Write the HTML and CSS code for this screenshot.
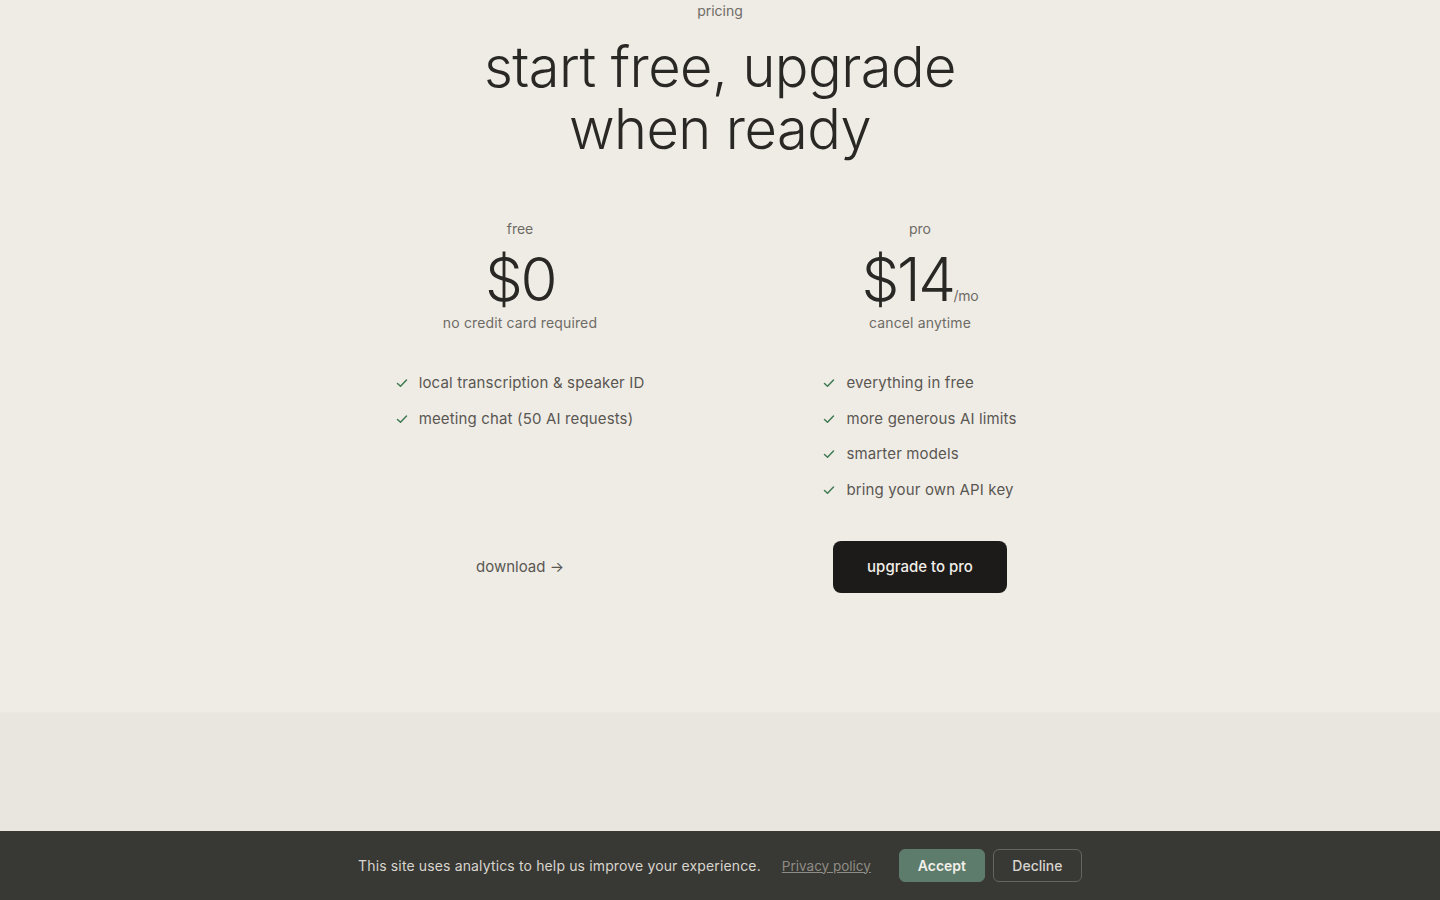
FILE: index.html
```html
<!DOCTYPE html>
<html lang="en">
<head>
<meta charset="utf-8">
<title>pricing</title>
<link rel="stylesheet" href="styles.css">
</head>
<body>
<section class="pricing">
  <p class="eyebrow">pricing</p>
  <h1 class="headline">start free, upgrade<br>when ready</h1>
  <div class="plans">
    <div class="plan">
      <p class="plan-name">free</p>
      <p class="price">$0</p>
      <p class="plan-note">no credit card required</p>
      <ul class="features">
        <li><svg class="check" viewBox="0 0 12 12"><path d="M1.5 6.5 L4.5 9.2 L10.5 3"/></svg>local transcription &amp; speaker ID</li>
        <li><svg class="check" viewBox="0 0 12 12"><path d="M1.5 6.5 L4.5 9.2 L10.5 3"/></svg>meeting chat (50 AI requests)</li>
      </ul>
      <div class="cta"><a class="link-cta" href="#">download →</a></div>
    </div>
    <div class="plan">
      <p class="plan-name">pro</p>
      <p class="price">$14<span class="per">/mo</span></p>
      <p class="plan-note">cancel anytime</p>
      <ul class="features">
        <li><svg class="check" viewBox="0 0 12 12"><path d="M1.5 6.5 L4.5 9.2 L10.5 3"/></svg>everything in free</li>
        <li><svg class="check" viewBox="0 0 12 12"><path d="M1.5 6.5 L4.5 9.2 L10.5 3"/></svg>more generous AI limits</li>
        <li><svg class="check" viewBox="0 0 12 12"><path d="M1.5 6.5 L4.5 9.2 L10.5 3"/></svg>smarter models</li>
        <li><svg class="check" viewBox="0 0 12 12"><path d="M1.5 6.5 L4.5 9.2 L10.5 3"/></svg>bring your own API key</li>
      </ul>
      <div class="cta"><a class="btn-primary" href="#">upgrade to pro</a></div>
    </div>
  </div>
</section>
<section class="next"></section>
<div class="cookie">
  <p class="cookie-text">This site uses analytics to help us improve your experience.</p>
  <a class="cookie-link" href="#">Privacy policy</a>
  <div class="cookie-actions">
    <button class="btn-accept">Accept</button>
    <button class="btn-decline">Decline</button>
  </div>
</div>
</body>
</html>
```

FILE: styles.css
```css
* { box-sizing: border-box; }
html, body { margin: 0; padding: 0; }
body {
  background: #efece6;
  color: #2a2825;
  font-family: Inter, "Noto Sans", sans-serif;
  height: 900px;
  overflow: hidden;
}
p { margin: 0; }
a { text-decoration: none; }

.pricing {
  padding: 1px 0 120px;
  display: flex;
  flex-direction: column;
  align-items: center;
}
.eyebrow {
  font-size: 14px;
  line-height: 20px;
  color: #6e6b65;
}
.headline {
  margin: 15px 0 0;
  font-size: 56px;
  line-height: 62px;
  font-weight: 300;
  letter-spacing: -0.01em;
  text-align: center;
  color: #2a2825;
}
.plans {
  margin-top: 59px;
  width: 800px;
  display: grid;
  grid-template-columns: 1fr 1fr;
}
.plan {
  display: flex;
  flex-direction: column;
  align-items: center;
}
.plan-name {
  font-size: 14px;
  line-height: 20px;
  color: #6e6b65;
}
.price {
  margin-top: 8px;
  height: 64px;
  font-size: 60px;
  line-height: 64px;
  font-weight: 300;
  letter-spacing: -0.04em;
  color: #2a2825;
}
.per {
  font-size: 14px;
  line-height: 0;
  letter-spacing: -0.02em;
  color: #6e6b65;
  font-weight: 400;
}
.plan-note {
  margin-top: 2px;
  font-size: 14px;
  line-height: 20px;
  color: #6e6b65;
  letter-spacing: 0.01em;
}
.features {
  list-style: none;
  margin: 39px 0 0;
  padding: 0;
  display: flex;
  flex-direction: column;
  gap: 13.5px;
}
.features li {
  display: flex;
  align-items: center;
  gap: 11px;
  font-size: 15px;
  line-height: 22px;
  color: #5a5752;
  letter-spacing: 0.01em;
}
.check {
  width: 12px;
  height: 12px;
  fill: none;
  stroke: #3f7a52;
  stroke-width: 1.5;
  stroke-linecap: round;
  stroke-linejoin: round;
  flex: none;
}
.cta {
  margin-top: auto;
  padding-top: 40px;
  height: 92px;
  display: flex;
  align-items: flex-end;
}
.link-cta {
  height: 52px;
  display: flex;
  align-items: center;
  font-size: 15px;
  color: #5a5752;
}
.btn-primary {
  width: 174px;
  height: 52px;
  border-radius: 8px;
  background: #1c1b19;
  color: #f1eee8;
  font-size: 15px;
  font-weight: 500;
  display: flex;
  align-items: center;
  justify-content: center;
}

.next {
  background: #e9e5df;
  height: 400px;
  box-shadow: 0 -1px 0 #ebe8e1;
}

.cookie {
  position: fixed;
  left: 0;
  right: 0;
  bottom: 0;
  height: 69px;
  background: #383834;
  display: flex;
  align-items: center;
  justify-content: center;
  gap: 21px;
  font-size: 14px;
}
.cookie-text {
  color: #d8d5ce;
  letter-spacing: 0.01em;
}
.cookie-link {
  color: #8f8c85;
  text-decoration: underline;
  font-size: 13.5px;
}
.cookie-actions {
  margin-left: 7px;
  display: flex;
  gap: 8px;
}
.cookie-actions button {
  height: 33px;
  border-radius: 6px;
  font-family: inherit;
  font-size: 14px;
  cursor: pointer;
}
.btn-accept {
  width: 86px;
  background: #5d7c6b;
  border: 1px solid #5d7c6b;
  color: #f2efe9;
  font-weight: 600;
}
.btn-decline {
  width: 89px;
  background: transparent;
  border: 1px solid #66645e;
  color: #d8d5ce;
  font-weight: 500;
}
```
